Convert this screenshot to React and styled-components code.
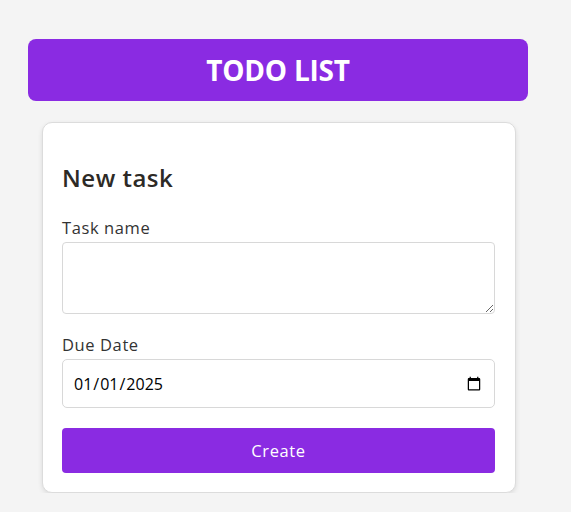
import React from "react";
import styled, { createGlobalStyle } from "styled-components";

const Global = createGlobalStyle`
  html, body { margin: 0; padding: 0; background: #f4f4f4; }
  body { font-family: "Open Sans", "Noto Sans", sans-serif; color: #333; }
  * { box-sizing: border-box; }
`;

const Page = styled.div`
  padding: 39px 0 0 28px;
  display: flex;
  flex-direction: column;
  align-items: flex-start;
  gap: 21px;
`;

const Header = styled.header`
  width: 500px;
  height: 62px;
  background: #8a2be2;
  border-radius: 8px;
  display: flex;
  align-items: center;
  justify-content: center;
`;

const HeaderTitle = styled.h1`
  margin: 0;
  color: #fff;
  font-size: 28px;
  font-weight: 700;
  letter-spacing: -0.2px;
`;

const Card = styled.form`
  width: 474px;
  margin-left: 14px;
  background: #fff;
  border: 1px solid #dcdcdc;
  border-radius: 10px;
  box-shadow: 0 2px 5px rgba(0, 0, 0, 0.1);
  padding: 37px 20px 19px 19px;
  display: flex;
  flex-direction: column;
`;

const Title = styled.h2`
  margin: 0 0 22px;
  font-size: 24px;
  font-weight: 600;
  color: #2d2a26;
  line-height: 36px;
  letter-spacing: 0.5px;
`;

const Field = styled.div`
  display: flex;
  flex-direction: column;
  gap: 4px;
  margin-bottom: ${(p) => p.$gap || 0}px;
`;

const Label = styled.label`
  font-size: 16.5px;
  line-height: 20px;
  letter-spacing: 0.6px;
  color: #333;
`;

const TextArea = styled.textarea`
  width: 100%;
  height: 72px;
  border: 1px solid #d8d8d8;
  border-radius: 4px;
  padding: 10px;
  font-family: inherit;
  font-size: 16px;
  resize: vertical;
`;

const DateInput = styled.input`
  width: 100%;
  height: 49px;
  border: 1px solid #d8d8d8;
  border-radius: 5px;
  padding: 0 10px;
  font-family: inherit;
  font-size: 16px;
  color: #000;
  background: #fff;
`;

const Button = styled.button`
  width: 100%;
  height: 45px;
  border: none;
  border-radius: 4px;
  background: #8a2be2;
  color: #fff;
  font-family: inherit;
  font-size: 16.5px;
  letter-spacing: 0.6px;
  cursor: pointer;
`;

export default function App() {
  return (
    <>
      <Global />
      <Page>
        <Header>
          <HeaderTitle>TODO LIST</HeaderTitle>
        </Header>
        <Card onSubmit={(e) => e.preventDefault()}>
          <Title>New task</Title>
          <Field $gap={21}>
            <Label htmlFor="task">Task name</Label>
            <TextArea id="task" />
          </Field>
          <Field $gap={20}>
            <Label htmlFor="due">Due Date</Label>
            <DateInput id="due" type="date" defaultValue="2025-01-01" />
          </Field>
          <Button type="submit">Create</Button>
        </Card>
      </Page>
    </>
  );
}
